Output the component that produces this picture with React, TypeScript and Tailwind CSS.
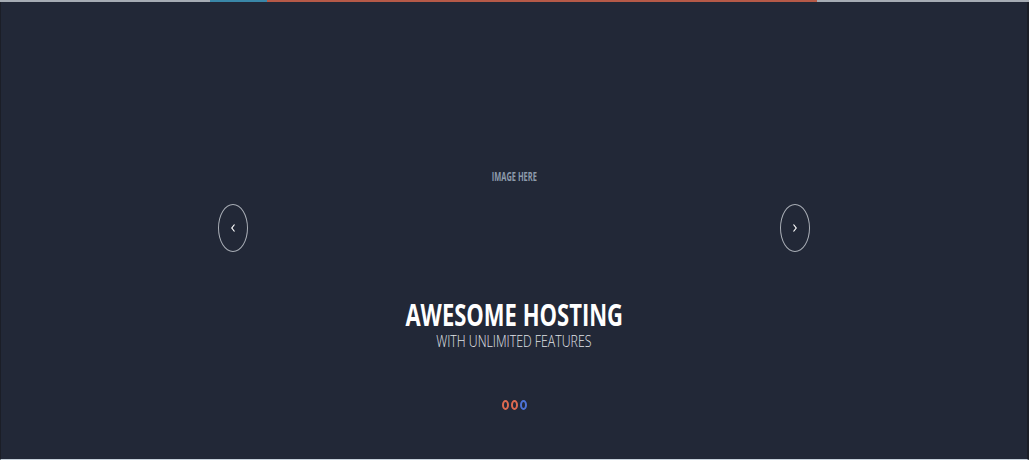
const Dot = ({ c }: { c: string }) => (
  <span className={`block h-[10px] w-[7px] rounded-[50%] border-2 ${c}`} />
);

export default function App() {
  return (
    <div className="flex h-[460px] w-[1029px] flex-col overflow-hidden bg-[#222837] font-['Open_Sans',sans-serif]">
      <div className="flex h-[2px] shrink-0">
        <div className="w-[210px] bg-[#a6acb4]" />
        <div className="w-[57px] bg-[#3a87a8]" />
        <div className="w-[550px] bg-[#b65a48]" />
        <div className="flex-1 bg-[#a6acb4]" />
      </div>
      <div className="flex flex-1 border-l border-r-2 border-b border-l-[#1b1e27] border-r-[#1b1e27] border-b-[#c9d3dc]">
        <div className="flex flex-1 items-start justify-center">
          <button className="mt-[202px] flex h-[48px] w-[30px] items-center justify-center rounded-[50%] border border-[#a9aeb6] text-white">
            <svg width="6" height="10" viewBox="0 0 6 10" fill="none" stroke="currentColor" strokeWidth="1.2">
              <polyline points="4.5,1.5 1.8,5 4.5,8.5" />
            </svg>
          </button>
          <div className="flex w-[532px] flex-col items-center">
            <p className="mt-[168px] scale-x-[0.62] text-[12px] font-bold leading-[14px] text-[#8e9bab]">IMAGE HERE</p>
            <h1 className="mt-[114px] scale-x-[0.71] text-[31px] font-bold leading-[32px] text-white">AWESOME HOSTING</h1>
            <p className="mt-[1px] scale-x-[0.77] text-[16px] font-light leading-[20px] text-[#e1e4e8]">WITH UNLIMITED FEATURES</p>
            <div className="mt-[49px] flex gap-[2px]">
              <Dot c="border-[#dd6a50]" />
              <Dot c="border-[#dd6a50]" />
              <Dot c="border-[#4d73d8]" />
            </div>
          </div>
          <button className="mt-[202px] flex h-[48px] w-[30px] items-center justify-center rounded-[50%] border border-[#a9aeb6] text-white">
            <svg width="6" height="10" viewBox="0 0 6 10" fill="none" stroke="currentColor" strokeWidth="1.2">
              <polyline points="1.5,1.5 4.2,5 1.5,8.5" />
            </svg>
          </button>
        </div>
      </div>
    </div>
  );
}
